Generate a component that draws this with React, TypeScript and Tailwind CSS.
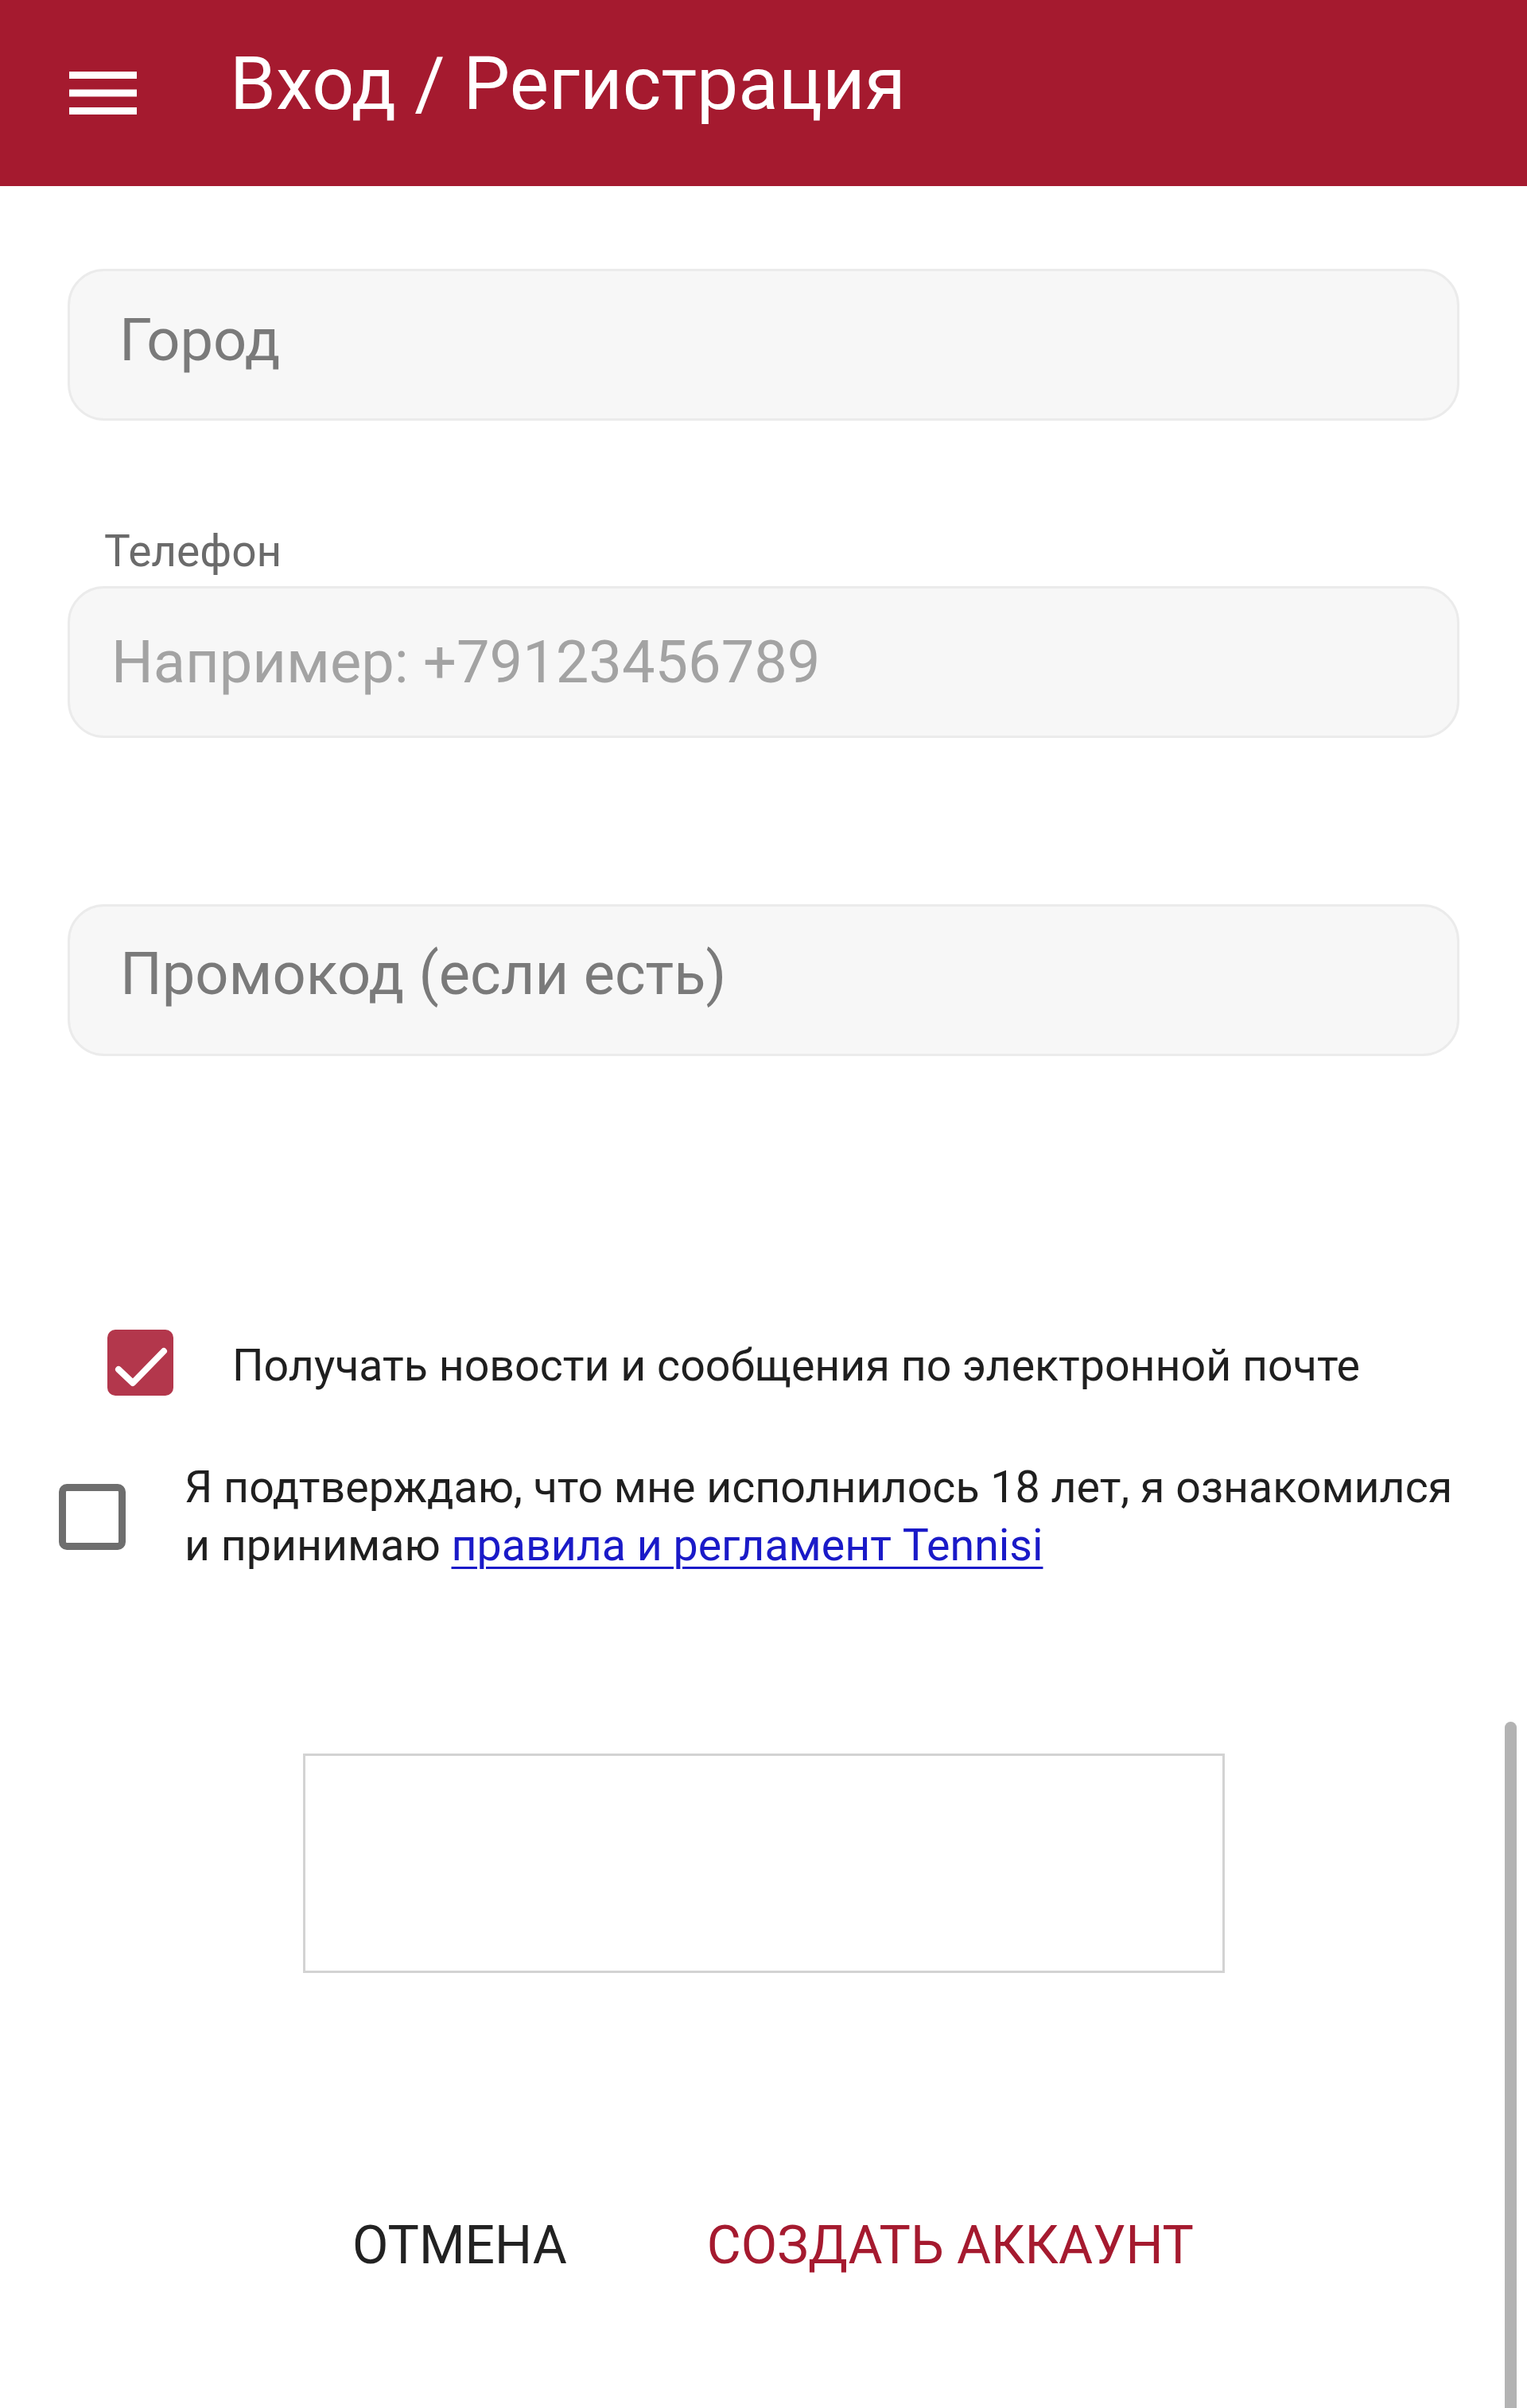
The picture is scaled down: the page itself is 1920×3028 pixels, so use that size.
import React from "react";

function Menu() {
  return (
    <svg width="85" height="54" viewBox="0 0 85 54" className="shrink-0">
      <rect x="0" y="0" width="85" height="9" fill="#fff" />
      <rect x="0" y="22.5" width="85" height="9" fill="#fff" />
      <rect x="0" y="45" width="85" height="9" fill="#fff" />
    </svg>
  );
}

function Field({ text, pl, color, size }: { text: string; pl: string; color: string; size: string }) {
  return (
    <div
      className={`flex h-[191px] items-center rounded-[46px] border-[3px] border-[#ebebeb] bg-[#f7f7f7] ${pl}`}
    >
      <span className={`${size} ${color} leading-none`}>{text}</span>
    </div>
  );
}

export default function App() {
  return (
    <div className="relative min-h-[3028px] w-full overflow-hidden bg-white font-['Roboto',sans-serif]">
      <header className="flex h-[234px] items-center bg-[#a51a2f] pl-[87px]">
        <Menu />
        <h1 className="ml-[117px] pb-[24px] text-[93px] font-normal leading-none text-white">
          Вход / Регистрация
        </h1>
      </header>

      <main className="px-[85px]">
        <div className="mt-[104px]">
          <Field text="Город" pl="pl-[62px] pb-[12px]" color="text-[#7a7a7a]" size="text-[74px]" />
        </div>

        <div className="mt-[132px] pl-[46px] text-[55px] leading-[65px] text-[#6b6b6b]">Телефон</div>
        <div className="mt-[11px]">
          <Field
            text="Например: +79123456789"
            pl="pl-[52px]"
            color="text-[#a3a3a3]"
            size="text-[74px]"
          />
        </div>

        <div className="mt-[209px]">
          <Field
            text="Промокод (если есть)"
            pl="pl-[63px] pb-[16px]"
            color="text-[#7a7a7a]"
            size="text-[74px]"
          />
        </div>
      </main>

      <section className="mt-[344px]">
        <div className="flex items-center pl-[135px]">
          <div className="h-[83px] w-[83px] shrink-0 rounded-[10px] bg-[#b3374c]">
            <svg width="83" height="83" viewBox="0 0 83 83">
              <path
                d="M14 50 L32 67 L71 27"
                fill="none"
                stroke="#fff"
                strokeWidth="8"
                strokeLinecap="round"
                strokeLinejoin="round"
              />
            </svg>
          </div>
          <span className="ml-[74px] pt-[8px] text-[55.5px] leading-[73px] text-[#1f1f1f]">
            Получать новости и сообщения по электронной почте
          </span>
        </div>

        <div className="mt-[79px] flex items-center pl-[74px] pr-[40px]">
          <div className="h-[83px] w-[84px] shrink-0 rounded-[10px] border-[9px] border-[#6e6e6e]" />
          <p className="ml-[74px] text-[55.5px] leading-[73px] text-[#1f1f1f]">
            Я подтверждаю, что мне исполнилось 18 лет, я ознакомился
            <br />и принимаю{" "}
            <a href="#" className="text-[#1a1ac8] underline decoration-[3px] underline-offset-[8px]">
              правила и регламент Tennisi
            </a>
          </p>
        </div>
      </section>

      <div className="mx-auto mt-[225px] h-[276px] w-[1159px] border-[3px] border-[#d3d3d3] bg-white" />

      <div className="mt-[310px] flex justify-center gap-[176px] pl-[24px] text-[66px] leading-none">
        <button className="uppercase text-[#222]">Отмена</button>
        <button className="uppercase text-[#a51a2f]">Создать аккаунт</button>
      </div>

      <div className="absolute right-[13px] top-[2165px] bottom-0 w-[15px] rounded-t-full bg-[#b3b3b3]" />
    </div>
  );
}
